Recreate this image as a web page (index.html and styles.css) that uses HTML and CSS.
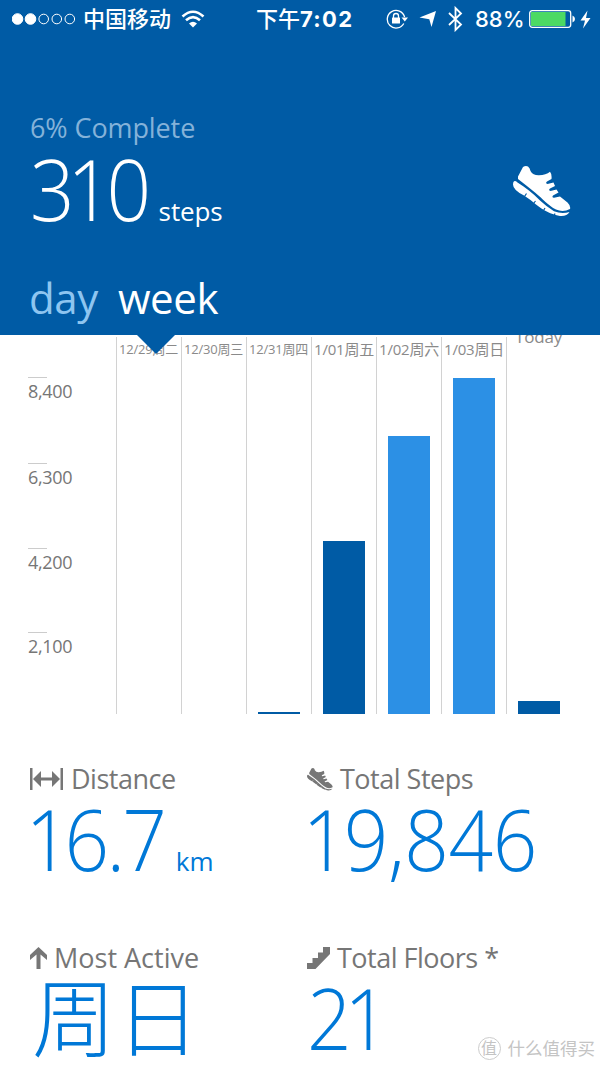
FILE: index.html
```html
<!DOCTYPE html>
<html lang="zh-CN">
<head>
  <meta charset="UTF-8">
  <meta name="viewport" content="width=device-width, initial-scale=1.0">
  <title>Steps</title>
  <link rel="stylesheet" href="styles.css">
</head>
<body>
  <svg class="symbols" aria-hidden="true">
    <symbol id="shoe" viewBox="0 0 58 51">
      <path d="M10 1Q12.500-0.500 15 0.500Q17 2 17.500 5Q20 9.500 26 9.300Q33 9 37 5.800Q39 8 38.500 13L34 15.500Q32 17.500 34.500 18L40.500 16.500L42 20L37 22.500Q35 24.500 37.500 25L43.500 23.500L45.500 26.500L40 29.500Q38.500 31.500 41 31.800L47 30.500L54.500 36.500Q58 40 57 43Q50 46.500 43 43.500C35 39.500 30 33 22 26.500Q14 20 5 13V10.500Z"/>
      <path d="M1 15.200Q3 14.200 4.500 16.500C12 21 20 27.500 27 34.500Q34 41 41 45.300Q49 48.500 56.500 46Q54 50.500 47 50C38 48.500 30 44 23 38.500Q18 34 11 29.500Q0 24 0 18.500Q0 16 1 15.200Z"/>
      <path class="sole-gap" d="M11.500 30.500l2-3M20.500 37.500l2-2.500M30.500 44.500l1.500-2.500M41 50l1-2.500"/>
    </symbol>
  </svg>

  <header class="hero">
    <div class="status-bar">
      <div class="status-left">
        <svg class="signal" width="64" height="12" viewBox="0 0 64 12">
          <circle class="full" cx="5.500" cy="6" r="5.300"/>
          <circle class="full" cx="18.500" cy="6" r="5.300"/>
          <circle cx="31.700" cy="6" r="4.800"/>
          <circle cx="44.800" cy="6" r="4.800"/>
          <circle cx="57.800" cy="6" r="4.800"/>
        </svg>
        <span class="carrier">中国移动</span>
        <svg class="wifi" width="24" height="18" viewBox="0 0 24 18">
          <path d="M1.500 6.500Q12-3 22.500 6.500M5 10.300Q12 4 19 10.300"/>
          <path class="full" d="M8 13.500Q12 10 16 13.500L12 17.500z"/>
        </svg>
      </div>
      <div class="clock">下午<b>7:02</b></div>
      <div class="status-right">
        <svg width="23" height="20" viewBox="0 0 23 20">
          <path class="line" d="M17.800 14.500A8.800 8.800 0 1 1 18.600 8"/>
          <path d="M15.500 8.500h6.500l-3.200 4z"/>
          <rect x="6" y="8.500" width="8" height="6" rx="0.500"/>
          <path class="line" d="M7.500 9V7a2.500 2.500 0 0 1 5 0v2"/>
        </svg>
        <svg class="locate" width="18" height="18" viewBox="0 0 18 18">
          <path d="M17 1L12.500 17L10.300 9.300L0.500 7.500z"/>
        </svg>
        <svg class="bluetooth" width="15" height="26" viewBox="0 0 15 26">
          <path d="M1 7l12 11.500L7.500 24V2L13 7.500L1 19"/>
        </svg>
        <span class="percent">88%</span>
        <svg class="battery" width="47" height="18" viewBox="0 0 47 18">
          <rect class="line" x="0.700" y="0.700" width="41" height="16.600" rx="2.500"/>
          <rect class="charge" x="2" y="2" width="34.500" height="14"/>
          <path d="M43.500 5.500Q46 6.500 46 9T43.500 12.500z"/>
        </svg>
        <svg class="bolt" width="11" height="19" viewBox="0 0 11 19">
          <path d="M7.500 0.500L0.500 10.500H5L3 18.500L10.500 8H6z"/>
        </svg>
      </div>
    </div>

    <div class="goal">
      <div>
        <div class="goal-label">6% Complete</div>
        <div class="goal-value"><span class="digits">3<i>1</i>0</span><span class="unit">steps</span></div>
      </div>
      <svg class="goal-shoe"><use href="#shoe"/></svg>
    </div>

    <nav class="tabs">
      <span class="tab">day</span>
      <span class="tab active">week</span>
    </nav>
  </header>

  <main>
    <section class="chart">
      <div class="axis">
        <span>8,400</span>
        <span>6,300</span>
        <span>4,200</span>
        <span>2,100</span>
      </div>
      <div class="days">
        <div class="day small"><span>12/29周二</span></div>
        <div class="day small"><span>12/30周三</span></div>
        <div class="day small"><span>12/31周四</span><div class="bar" style="height: 2px"></div></div>
        <div class="day"><span>1/01周五</span><div class="bar" style="height: 173px"></div></div>
        <div class="day"><span>1/02周六</span><div class="bar light" style="height: 278px"></div></div>
        <div class="day"><span>1/03周日</span><div class="bar light" style="height: 336px"></div></div>
        <div class="day today"><span>Today</span><div class="bar" style="height: 13px"></div></div>
      </div>
    </section>

    <section class="stats">
      <div class="stat">
        <div class="stat-label">
          <svg class="icon-distance" width="34" height="22" viewBox="0 0 34 22">
            <path d="M0 0h2.500v22H0zM30.500 0H33v22h-2.500zM3 11l8-8v6.500h11V3l8 8l-8 8v-6.500H11V19z"/>
          </svg>
          <span class="tight">Distance</span>
        </div>
        <div class="stat-value"><span class="digits"><i>1</i>6.7</span><span class="unit">km</span></div>
      </div>
      <div class="stat">
        <div class="stat-label">
          <svg class="icon-shoe"><use href="#shoe"/></svg>
          <span class="tight">Total Steps</span>
        </div>
        <div class="stat-value"><span class="digits wide"><i>1</i>9,846</span></div>
      </div>
      <div class="stat">
        <div class="stat-label">
          <svg class="icon-arrow" width="17" height="22" viewBox="0 0 17 22">
            <path d="M8.500 0L17 8v5L10.500 7.500V22h-4V7.500L0 13V8z"/>
          </svg>
          <span>Most Active</span>
        </div>
        <div class="stat-value weekday">周日</div>
      </div>
      <div class="stat">
        <div class="stat-label">
          <svg class="icon-stairs" width="23" height="22" viewBox="0 0 23 22">
            <path d="M0 22v-6h5.500v-5H11V5.500h5V0h7v7L8.500 22z"/>
          </svg>
          <span class="tight">Total Floors *</span>
        </div>
        <div class="stat-value"><span class="digits">2<i>1</i></span></div>
      </div>
    </section>
  </main>

  <div class="watermark"><span class="seal">值</span>什么值得买</div>
</body>
</html>
```
FILE: styles.css
```css
* {
  box-sizing: border-box;
}

body {
  margin: 0;
  width: 600px;
  height: 1065px;
  position: relative;
  overflow: hidden;
  background: #fff;
  font-family: "Open Sans", "Noto Sans CJK SC", sans-serif;
  color: #767676;
}

svg {
  display: block;
  flex-shrink: 0;
  fill: currentColor;
}

/* big numbers are slightly condensed */
.digits {
  display: inline-block;
  transform: scaleX(0.92);
  transform-origin: left;
}

.digits.wide {
  letter-spacing: -0.5px;
}

/* the digit one sits closer to its neighbours */
.digits i {
  font-style: normal;
  margin-left: -6px;
  margin-right: -3px;
}

.digits i:first-child {
  margin-left: -5px;
}

.symbols {
  position: absolute;
  width: 0;
  height: 0;
}

.sole-gap {
  stroke: var(--gap);
  stroke-width: 1.2;
}

/* header */
.hero {
  --gap: #005ba5;
  position: relative;
  z-index: 1;
  height: 335px;
  background: #005ba5;
  color: #fff;
}

/* pointer under the active tab */
.hero::after {
  content: "";
  position: absolute;
  top: 335px;
  left: 137px;
  border: 19px solid transparent;
  border-top-color: #005ba5;
  border-bottom: 0;
}

.status-bar {
  display: grid;
  grid-template-columns: 256px 130px 1fr;
  align-items: center;
  height: 38px;
  font-family: Inter, "Noto Sans CJK SC", sans-serif;
  font-size: 22px;
  line-height: 38px;
}

.status-left,
.status-right {
  display: flex;
  align-items: center;
}

.status-left {
  padding-left: 12px;
}

.signal circle {
  fill: none;
  stroke: #fff;
  stroke-width: 1;
}

.signal .full {
  fill: #fff;
}

.carrier {
  margin-left: 7px;
  font-weight: 500;
}

.wifi {
  margin-left: 10px;
}

.wifi path {
  fill: none;
  stroke: #fff;
  stroke-width: 2.6;
}

.wifi .full {
  fill: #fff;
  stroke: none;
}

.clock {
  font-weight: 500;
  white-space: nowrap;
}

.clock b {
  font-weight: 650;
  letter-spacing: 1.3px;
}

.line {
  fill: none;
  stroke: #fff;
  stroke-width: 1.3;
}

.locate {
  margin-left: 10px;
}

.bluetooth {
  margin-left: 11px;
}

.bluetooth path {
  fill: none;
  stroke: #fff;
  stroke-width: 1.8;
}

.percent {
  margin-left: 12px;
  width: 48px;
  font-weight: 500;
}

.battery {
  margin-left: 6px;
}

.charge {
  fill: #4cd964;
}

.bolt {
  margin-left: 4px;
}

.goal {
  display: flex;
  justify-content: space-between;
  height: 232px;
  padding: 71px 29px 0 30px;
}

.goal-label {
  height: 38px;
  font-size: 27px;
  line-height: 38px;
  letter-spacing: -0.1px;
  color: #84b2d9;
}

.goal-value,
.stat-value {
  font-size: 85px;
  font-weight: 300;
  line-height: 82px;
  letter-spacing: -3px;
  white-space: nowrap;
}

.unit {
  font-size: 26px;
  font-weight: 400;
  letter-spacing: -0.1px;
}

.goal-shoe {
  width: 58px;
  height: 51px;
  margin-top: 57px;
}

.tabs {
  display: flex;
  gap: 20px;
  padding-left: 29px;
  font-size: 42px;
  line-height: 56px;
  letter-spacing: -0.4px;
}

.tab {
  color: #8ec5f0;
}

.tab.active {
  color: #fff;
}

/* weekly chart */
.chart {
  display: flex;
  height: 379px;
  padding-top: 2px;
}

.axis {
  display: flex;
  flex-direction: column;
  width: 116px;
  padding: 40px 0 0 28px;
}

.axis span {
  flex-shrink: 0;
  height: 85px;
  font-size: 18px;
  line-height: 27px;
  letter-spacing: -0.3px;
  text-indent: 1px;
}

.axis span:first-child {
  height: 86px;
}

.axis span:nth-child(3) {
  height: 84px;
}

.axis span::before {
  content: "";
  display: block;
  width: 19px;
  height: 1px;
  background: #ccc;
}

.days {
  display: flex;
}

.day {
  display: flex;
  flex-direction: column;
  justify-content: space-between;
  width: 65px;
  border-left: 1px solid #d2d2d2;
  padding-left: 2px;
  font-size: 15px;
  line-height: 25px;
  letter-spacing: -0.2px;
  white-space: nowrap;
  color: #8a8a8a;
}

.day.small {
  font-size: 13px;
}

.today span {
  margin: -13px 0 0 6px;
  font-size: 17px;
}

.bar {
  width: 42px;
  margin-left: 9px;
  background: #005ba5;
}

.bar.light {
  background: #2c90e5;
}

/* totals */
.stats {
  --gap: #fff;
  display: grid;
  grid-template-columns: 277px 1fr;
  grid-template-rows: 179px 126px;
  padding: 46px 0 0 30px;
}

.stat-label {
  display: flex;
  align-items: center;
  height: 38px;
  font-size: 27px;
  line-height: 38px;
  white-space: nowrap;
}

.stat-label svg {
  margin-right: 7px;
}

.tight {
  letter-spacing: -0.5px;
}

.stat-label .icon-shoe {
  width: 26px;
  height: 23px;
}

.stat-value {
  line-height: 80px;
  color: #0078d7;
}

.weekday {
  font-family: "Noto Sans CJK SC", sans-serif;
  font-size: 84px;
  line-height: 74px;
  letter-spacing: 0;
  text-indent: 2px;
}

.watermark {
  position: absolute;
  right: 5px;
  bottom: 4px;
  display: flex;
  align-items: center;
  gap: 7px;
  font-size: 17.5px;
  line-height: 26px;
  color: #c4c4c4;
}

.seal {
  width: 23px;
  height: 23px;
  border: 1px solid #ccc;
  border-radius: 50%;
  font-size: 16px;
  line-height: 20px;
  text-align: center;
}
```
